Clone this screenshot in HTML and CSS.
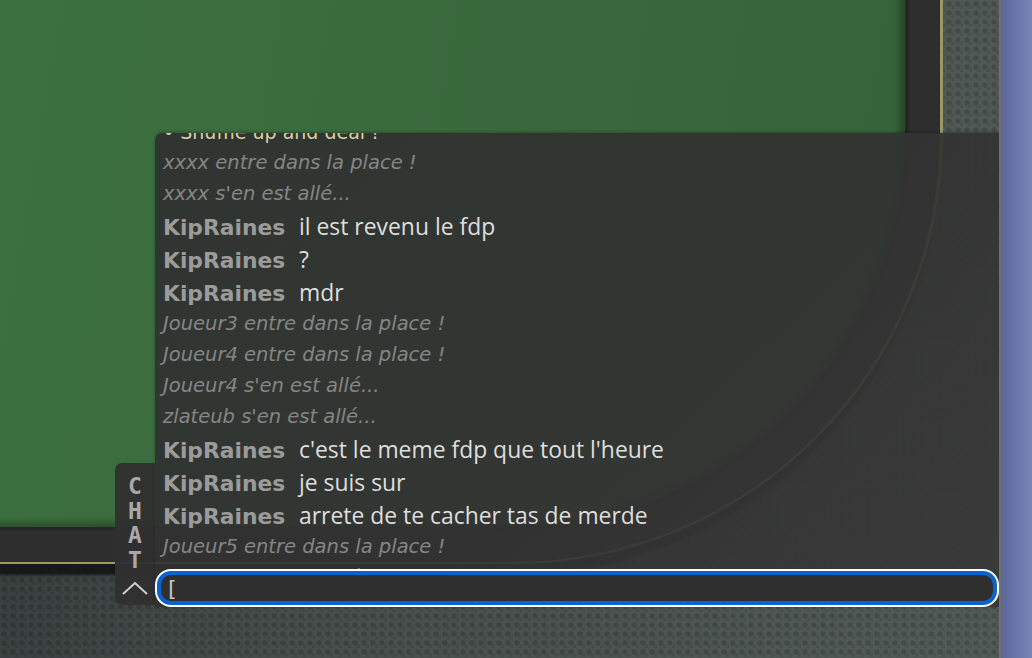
FILE: index.html
```html
<!DOCTYPE html>
<html lang="fr">
<head>
    <meta charset="UTF-8">
    <meta name="viewport" content="width=device-width, initial-scale=1.0">
    <title>Table - Chat</title>
    <link rel="stylesheet" href="styles.css">
</head>
<body>

    <div class="screen">
        <div class="room">
            <div class="table">
                <div class="felt"></div>
            </div>

            <div class="chat">
                <div class="chat-tab">
                    <span>C</span>
                    <span>H</span>
                    <span>A</span>
                    <span>T</span>
                    <svg class="chevron" width="26" height="14" viewBox="0 0 26 14">
                        <path d="M1 13 L13 2 L25 13" fill="none" stroke="#cfcfcf" stroke-width="2"/>
                    </svg>
                </div>

                <div class="chat-panel">
                    <div class="messages">
                        <div class="line dealer">• Shuffle up and deal !</div>
                        <div class="line sys">xxxx entre dans la place !</div>
                        <div class="line sys">xxxx s'en est allé...</div>
                        <div class="line msg"><span class="name">KipRaines</span>il est revenu le fdp</div>
                        <div class="line msg"><span class="name">KipRaines</span>?</div>
                        <div class="line msg"><span class="name">KipRaines</span>mdr</div>
                        <div class="line sys">Joueur3 entre dans la place !</div>
                        <div class="line sys">Joueur4 entre dans la place !</div>
                        <div class="line sys">Joueur4 s'en est allé...</div>
                        <div class="line sys">zlateub s'en est allé...</div>
                        <div class="line msg"><span class="name">KipRaines</span>c'est le meme fdp que tout l'heure</div>
                        <div class="line msg"><span class="name">KipRaines</span>je suis sur</div>
                        <div class="line msg"><span class="name">KipRaines</span>arrete de te cacher tas de merde</div>
                        <div class="line sys">Joueur5 entre dans la place !</div>
                        <div class="line sys">Joueur5 s'en est allé...</div>
                    </div>
                    <input class="chat-input" type="text" value="[">
                </div>
            </div>
        </div>
        <div class="side"></div>
    </div>

</body>
</html>
```

FILE: styles.css
```css
html, body {
    margin: 0;
    padding: 0;
    overflow: hidden;
}

body {
    font-family: "DejaVu Sans", sans-serif;
    background: #4b5350;
}

.screen {
    display: flex;
    width: 1032px;
    height: 658px;
}

.room {
    position: relative;
    width: 999px;
    height: 658px;
    overflow: hidden;
    background:
        radial-gradient(circle at 4px 4px, rgba(0, 0, 0, 0.17) 2px, transparent 3.4px) 0 0 / 9px 9px,
        radial-gradient(circle at 8px 8px, rgba(0, 0, 0, 0.1) 1.5px, transparent 3px) 0 0 / 9px 9px,
        linear-gradient(100deg, #363c3b 0%, #464d4b 35%, #535b58 100%);
}

.side {
    width: 31px;
    border-left: 2px solid #707070;
    background: linear-gradient(90deg, #5a6797 0%, #6d7aad 60%, #7884b6 100%);
}

/* table + rail */
.table {
    position: absolute;
    left: -300px;
    top: -300px;
    width: 1243px;
    height: 864px;
    box-sizing: border-box;
    display: flex;
    padding: 0 35px 35px 0;
    background: #2e2e2e;
    border-right: 3px solid #9d9866;
    border-bottom: 2px solid #9d9866;
    border-bottom-right-radius: 430px;
    box-shadow: 0 14px 3px -3px rgba(18, 18, 18, 0.85);
}

.felt {
    flex: 1;
    background: linear-gradient(100deg, #3f7443 0%, #3a6b3d 55%, #356338 100%);
    border-bottom-right-radius: 395px;
    box-shadow: inset -6px -5px 6px rgba(0, 0, 0, 0.28), 4px 3px 0 #262626;
}

/* chat */
.chat {
    position: absolute;
    left: 115px;
    top: 133px;
    right: 0;
    height: 474px;
    display: flex;
    align-items: flex-end;
}

.chat-tab {
    width: 40px;
    height: 142px;
    margin-bottom: 2px;
    box-sizing: border-box;
    padding-top: 11px;
    display: flex;
    flex-direction: column;
    align-items: center;
    background: rgba(48, 48, 48, 0.96);
    border-radius: 7px 0 0 7px;
    font-family: "DejaVu Sans Mono", monospace;
    font-weight: bold;
    font-size: 23px;
    line-height: 24.5px;
    color: #a8a8a8;
}

.chevron {
    margin-top: 9px;
    margin-left: -1px;
}

.chat-panel {
    flex: 1;
    height: 100%;
    display: grid;
    border-top-left-radius: 7px;
    background: linear-gradient(135deg, rgba(48, 48, 48, 0.92) 0%, rgba(50, 50, 50, 0.92) 55%, rgba(56, 56, 56, 0.94) 100%);
    box-shadow: 0 -1px 3px rgba(0, 0, 0, 0.25);
    overflow: hidden;
}

.messages {
    grid-area: 1 / 1;
    display: flex;
    flex-direction: column;
    justify-content: flex-end;
    overflow: hidden;
    padding: 0 8px 13px;
}

.line {
    flex: none;
    white-space: nowrap;
}

.dealer {
    height: 31px;
    line-height: 30px;
    font-size: 19px;
    color: #d6d0a4;
}

.sys {
    height: 31px;
    line-height: 30px;
    font-size: 19.5px;
    font-style: italic;
    color: #858585;
}

.msg {
    height: 33px;
    line-height: 33px;
    font-family: "Open Sans", sans-serif;
    font-size: 22.9px;
    color: #dedede;
}

.name {
    display: inline-block;
    width: 136px;
    font-family: "DejaVu Sans", sans-serif;
    font-weight: bold;
    font-size: 21.8px;
    color: #9b9b9b;
}

.chat-input {
    grid-area: 1 / 1;
    align-self: end;
    margin: 2px;
    height: 34px;
    box-sizing: border-box;
    border: 4px solid #0b63cf;
    border-radius: 14px;
    box-shadow: 0 0 0 2px #fff;
    background: #2f2f2f;
    padding: 0 0 0 7px;
    font-family: "DejaVu Sans", sans-serif;
    font-size: 22px;
    color: #c4c4c4;
    outline: none;
}
```
